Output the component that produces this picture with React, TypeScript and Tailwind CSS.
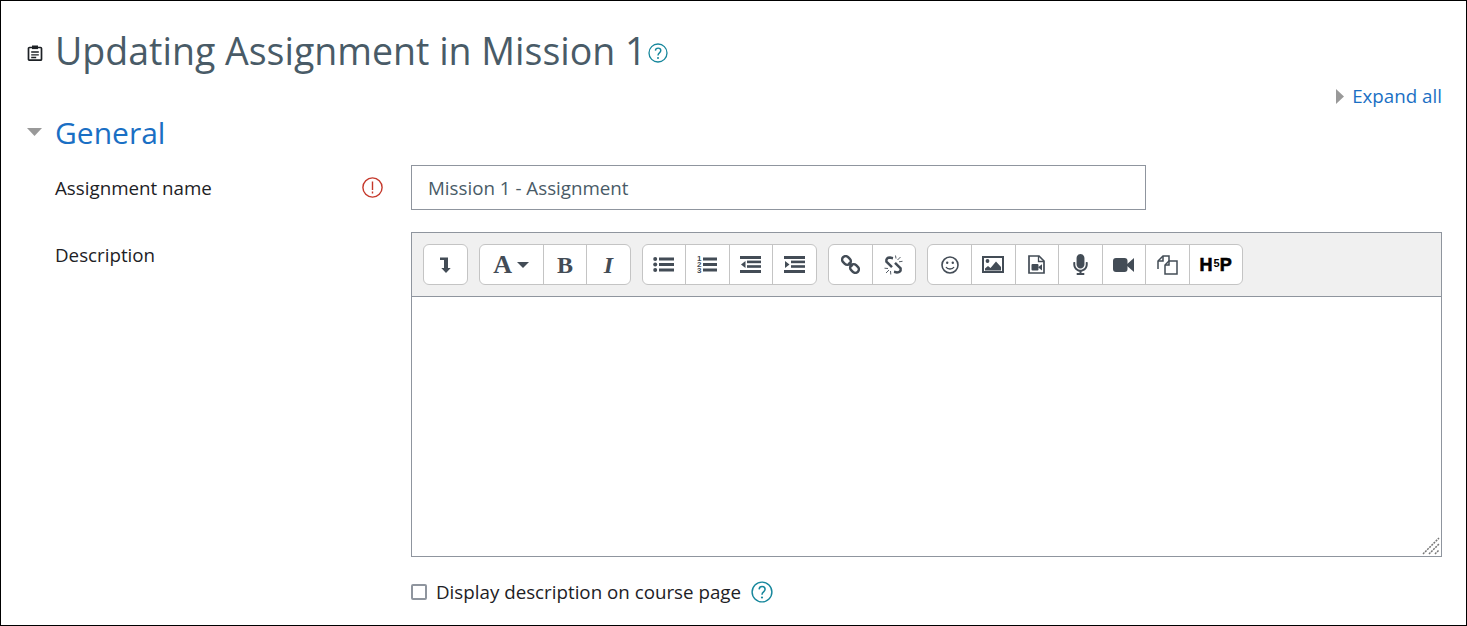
import { FaMicrophone } from 'react-icons/fa';
import type { ReactNode } from 'react';

const ink = '#434c56';

function ClipboardIcon() {
  return (
    <svg viewBox="0 0 16 16" className="w-[16px] h-[16px]" fill="none" stroke="#1d2125" strokeWidth="1.7">
      <rect x="1.5" y="2.5" width="13" height="12.7" rx="1" />
      <rect x="5" y="0.5" width="6" height="3.6" fill="#1d2125" stroke="none" />
      <path d="M4.2 7h7.6M4.2 9.8h7.6M4.2 12.5h5" strokeWidth="1.3" />
    </svg>
  );
}

function HelpIcon({ className }: { className: string }) {
  return (
    <svg viewBox="0 0 20 20" className={className} fill="none" stroke="#17879c" strokeWidth="1.3">
      <circle cx="10" cy="10" r="9" />
      <path d="M7.4 7.6c.2-3.4 5.4-3.3 5.4 0 0 2.4-2.8 2.2-2.8 4.8" strokeWidth="1.4" />
      <circle cx="10" cy="15" r="1" fill="#17879c" stroke="none" />
    </svg>
  );
}

function CollapseIcon() {
  return (
    <svg viewBox="0 0 11 16" className="w-[11px] h-[16px]" fill={ink}>
      <path d="M0 0.5h8v10.5h2.7l-4.7 5-4.7-5h2.7V3H0z" />
    </svg>
  );
}

function UlIcon() {
  return (
    <svg viewBox="0 0 21 15" className="w-[21px] h-[15px]" fill={ink}>
      <circle cx="2.2" cy="2" r="2" /><circle cx="2.2" cy="7.5" r="2" /><circle cx="2.2" cy="13" r="2" />
      <rect x="6" y="0.5" width="15" height="3" /><rect x="6" y="6" width="15" height="3" /><rect x="6" y="11.5" width="15" height="3" />
    </svg>
  );
}

function OlIcon() {
  return (
    <svg viewBox="0 0 20 19" className="w-[20px] h-[19px] overflow-visible" fill={ink}>
      <text x="0" y="6" fontSize="8" fontWeight="700" fontFamily="Liberation Sans">1</text>
      <text x="0" y="12.2" fontSize="8" fontWeight="700" fontFamily="Liberation Sans">2</text>
      <text x="0" y="18.4" fontSize="8" fontWeight="700" fontFamily="Liberation Sans">3</text>
      <rect x="6" y="2.5" width="14" height="3" /><rect x="6" y="8" width="14" height="3" /><rect x="6" y="13.5" width="14" height="3" />
    </svg>
  );
}

function OutdentIcon() {
  return (
    <svg viewBox="0 0 21 17" className="w-[21px] h-[17px]" fill={ink}>
      <rect width="21" height="3" /><rect y="14" width="21" height="3" />
      <rect x="7" y="4.6" width="14" height="2.6" /><rect x="7" y="9.2" width="14" height="2.6" />
      <path d="M5.5 5v7L1 8.5z" />
    </svg>
  );
}

function IndentIcon() {
  return (
    <svg viewBox="0 0 21 17" className="w-[21px] h-[17px]" fill={ink}>
      <rect width="21" height="3" /><rect y="14" width="21" height="3" />
      <rect x="7" y="4.6" width="14" height="2.6" /><rect x="7" y="9.2" width="14" height="2.6" />
      <path d="M1 5v7l4.5-3.5z" />
    </svg>
  );
}

function LinkIcon() {
  return (
    <svg viewBox="0 0 19 19" className="w-[19px] h-[19px]" fill="none" stroke={ink} strokeWidth="2.5">
      <rect x="0.8" y="2" width="9.4" height="7" rx="3.5" transform="rotate(45 5.5 5.5)" />
      <rect x="8.8" y="10" width="9.4" height="7" rx="3.5" transform="rotate(45 13.5 13.5)" />
      <path d="M7.5 7.5l4 4" />
    </svg>
  );
}

function UnlinkIcon() {
  return (
    <svg viewBox="0 0 19 20" className="w-[19px] h-[20px]" fill="none" stroke={ink}>
      <path d="M9 3.2L6 2.6Q1.8 2.6 2.4 6.6L8 12.2" strokeWidth="2.5" />
      <path d="M10 16.8L13 17.4Q17.2 17.4 16.6 13.4L11 7.8" strokeWidth="2.5" />
      <path d="M11.5 0.5l.5 3M13.5 5l3-3M15 6.8l3.5-.5M0.5 13.2l3.5.3M2 18l3-3M6.5 16l.3 3.5" strokeWidth="0.9" />
    </svg>
  );
}

function SmileIcon() {
  return (
    <svg viewBox="0 0 18 18" className="w-[18px] h-[18px]" fill="none" stroke={ink} strokeWidth="1.6">
      <circle cx="9" cy="9" r="8" />
      <circle cx="6.2" cy="6.8" r="1.2" fill={ink} stroke="none" />
      <circle cx="11.8" cy="6.8" r="1.2" fill={ink} stroke="none" />
      <path d="M5 11c1.5 2.6 6.5 2.6 8 0" strokeWidth="1.4" />
    </svg>
  );
}

function ImageIcon() {
  return (
    <svg viewBox="0 0 22 17" className="w-[22px] h-[17px]">
      <rect x="1" y="1" width="20" height="15" fill="none" stroke={ink} strokeWidth="2" />
      <circle cx="5.5" cy="5" r="1.9" fill={ink} />
      <path d="M3 14.5v-2l3-2.5 2.5 2 5.5-6.5 5 5.5v3.5z" fill={ink} />
    </svg>
  );
}

function FileVideoIcon() {
  return (
    <svg viewBox="0 0 17 19" className="w-[17px] h-[19px]">
      <path d="M1 1h10l5 5v12H1z" fill="none" stroke={ink} strokeWidth="1.7" />
      <path d="M10.5 1v5.5H16" fill="none" stroke={ink} strokeWidth="1.3" />
      <rect x="3.5" y="9" width="7" height="6.5" rx="1" fill={ink} />
      <path d="M10 12.2l4-3v6.2z" fill={ink} />
    </svg>
  );
}

function VideoIcon() {
  return (
    <svg viewBox="0 0 21 14" className="w-[21px] h-[14px]" fill={ink}>
      <rect width="14.5" height="14" rx="3" />
      <path d="M13 7l8-7v14z" />
    </svg>
  );
}

function FilesIcon() {
  return (
    <svg viewBox="0 0 21 20" className="w-[21px] h-[20px]" fill="#fff" stroke={ink} strokeWidth="1.5">
      <path d="M1 14V6l5-5h6v6" />
      <path d="M6 1v5H1" fill="none" />
      <path d="M8 19V10l4-4h8v13z" />
      <path d="M12 6v4H8" fill="none" />
    </svg>
  );
}

function ToolButton({ children, first, w }: { children: ReactNode; first?: boolean; w?: number }) {
  return (
    <div
      className={`flex items-center justify-center h-full ${first ? '' : 'border-l border-[#c4c4c4]'}`}
      style={{ width: w ?? (first ? 43 : 43.5) }}
    >
      {children}
    </div>
  );
}

function ToolGroup({ children }: { children: ReactNode }) {
  return (
    <div className="flex h-[41px] bg-white border border-[#c4c4c4] rounded-[6px] text-[#434c56]">{children}</div>
  );
}

export default function App() {
  return (
    <div className="w-[1467px] h-[626px] border border-black bg-white overflow-hidden pl-[25px] pr-[24px] font-['Open_Sans',sans-serif] text-[#1d2125]">
      <div className="flex items-center h-[100px]">
        <div className="w-[29px] pt-[3px] pl-[1px]"><ClipboardIcon /></div>
        <h1 className="text-[37.5px] leading-none text-[#495b67] whitespace-nowrap">Updating Assignment in Mission 1</h1>
        <HelpIcon className="ml-[1px] mt-[3px] w-[20px] h-[20px]" />
      </div>

      <div className="flex justify-end items-center gap-[8px] h-[24px] -mt-[17px] text-[18.75px] text-[#1a6fc4]">
        <svg viewBox="0 0 8 15" className="w-[8px] h-[15px]" fill="#999"><path d="M0 0l8 7.5L0 15z" /></svg>
        <span>Expand all</span>
      </div>

      <div className="flex items-center h-[44px] mt-[3px]">
        <div className="w-[29px] pb-[2px] pl-[1px]">
          <svg viewBox="0 0 15 8" className="w-[15px] h-[8px]" fill="#999"><path d="M0 0h15L7.5 8z" /></svg>
        </div>
        <h2 className="text-[30px] leading-none text-[#1a6fc4]">General</h2>
      </div>

      <div className="flex mt-[10px] pl-[29px]">
        <div className="w-[306px] flex items-center text-[18.75px] h-[45px] pt-[1px]">Assignment name</div>
        <div className="w-[50px] h-[45px] flex items-center pl-[1px]">
          <svg viewBox="0 0 21 21" className="w-[21px] h-[21px] mb-[1px]" fill="none" stroke="#c5382b" strokeWidth="1.4">
            <circle cx="10.5" cy="10.5" r="9.6" />
            <path d="M10.5 4.5v8.5M10.5 14.6v1.8" />
          </svg>
        </div>
        <input
          readOnly
          value="Mission 1 - Assignment"
          className="w-[735px] h-[45px] border border-[#8f959e] px-[16px] text-[18.75px] text-[#495b67] outline-none"
        />
      </div>

      <div className="flex mt-[22px] pl-[29px]">
        <div className="w-[356px] text-[18.75px] leading-[28px] pt-[9px]">Description</div>
        <div className="w-[1032px] h-[325px] border border-[#8f959e] flex flex-col relative">
          <div className="h-[64px] bg-[#f0f0f0] border-b border-[#8f959e] flex items-start gap-[11px] pl-[11px] pt-[11px]">
            <ToolGroup><ToolButton first><CollapseIcon /></ToolButton></ToolGroup>
            <ToolGroup>
              <ToolButton first w={63}>
                <span className="font-['Liberation_Serif',serif] font-bold text-[26px] leading-none">A</span>
                <svg viewBox="0 0 12 6" className="w-[12px] h-[6px] ml-[5px]" fill={ink}><path d="M0 0h12L6 6z" /></svg>
              </ToolButton>
              <ToolButton><span className="font-['Liberation_Serif',serif] font-bold text-[24px] leading-none">B</span></ToolButton>
              <ToolButton><span className="font-['Liberation_Serif',serif] font-bold italic text-[24px] leading-none">I</span></ToolButton>
            </ToolGroup>
            <ToolGroup>
              <ToolButton first w={42.3}><UlIcon /></ToolButton>
              <ToolButton><OlIcon /></ToolButton>
              <ToolButton><OutdentIcon /></ToolButton>
              <ToolButton><IndentIcon /></ToolButton>
            </ToolGroup>
            <ToolGroup>
              <ToolButton first><LinkIcon /></ToolButton>
              <ToolButton><UnlinkIcon /></ToolButton>
            </ToolGroup>
            <ToolGroup>
              <ToolButton first><SmileIcon /></ToolButton>
              <ToolButton><ImageIcon /></ToolButton>
              <ToolButton><FileVideoIcon /></ToolButton>
              <ToolButton><FaMicrophone className="text-[21px]" /></ToolButton>
              <ToolButton><VideoIcon /></ToolButton>
              <ToolButton><FilesIcon /></ToolButton>
              <ToolButton w={53.2}>
                <span className="flex items-center font-['Liberation_Sans',sans-serif] font-bold text-[18px] leading-none text-black [-webkit-text-stroke:0.6px_black]">
                  H
                  <span className="text-[11px] [-webkit-text-stroke:0px] ml-[1px] leading-[11px] -translate-y-[1px]">5</span>
                  P
                </span>
              </ToolButton>
            </ToolGroup>
          </div>
          <div className="flex-1 bg-white" />
          <svg viewBox="0 0 18 18" className="absolute right-[1px] bottom-[1px] w-[18px] h-[18px]" stroke="#777" strokeWidth="1.5" strokeDasharray="2 1">
            <path d="M1 17L17 1M7 17L17 7M13 17l4-4" />
          </svg>
        </div>
      </div>

      <div className="flex items-center ml-[385px] mt-[21px] h-[28px]">
        <div className="w-[16px] h-[16px] border-2 border-[#8f959e] rounded-[2px] bg-white" />
        <span className="ml-[9px] text-[18.75px]">Display description on course page</span>
        <HelpIcon className="ml-[10px] w-[22px] h-[22px]" />
      </div>
    </div>
  );
}
